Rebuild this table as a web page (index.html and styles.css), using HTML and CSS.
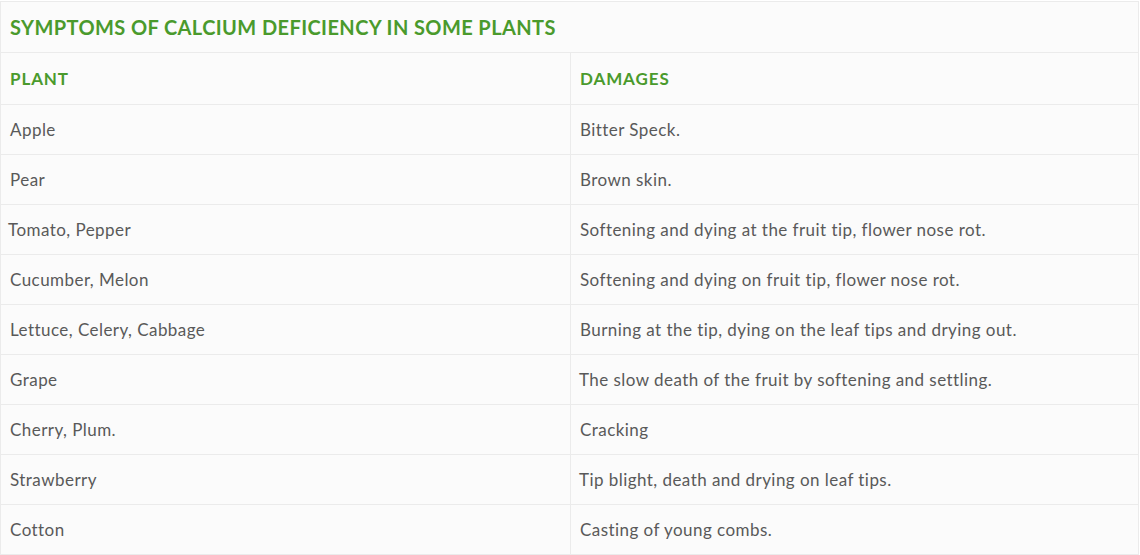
FILE: index.html
```html
<!DOCTYPE html>
<html>
<head>
<meta charset="utf-8">
<link rel="stylesheet" href="styles.css">
</head>
<body>
<table class="symptoms">
  <colgroup><col class="col-plant"><col class="col-dmg"></colgroup>
  <thead>
    <tr class="title-row"><th colspan="2" class="title">SYMPTOMS OF CALCIUM DEFICIENCY IN SOME PLANTS</th></tr>
    <tr class="head-row"><th>PLANT</th><th>DAMAGES</th></tr>
  </thead>
  <tbody>
    <tr><td>Apple</td><td>Bitter Speck.</td></tr>
    <tr><td>Pear</td><td>Brown skin.</td></tr>
    <tr><td class="tight">Tomato, Pepper</td><td>Softening and dying at the fruit tip, flower nose rot.</td></tr>
    <tr><td>Cucumber, Melon</td><td>Softening and dying on fruit tip, flower nose rot.</td></tr>
    <tr><td>Lettuce, Celery, Cabbage</td><td>Burning at the tip, dying on the leaf tips and drying out.</td></tr>
    <tr><td>Grape</td><td class="nudge">The slow death of the fruit by softening and settling.</td></tr>
    <tr><td>Cherry, Plum.</td><td>Cracking</td></tr>
    <tr><td>Strawberry</td><td class="nudge">Tip blight, death and drying on leaf tips.</td></tr>
    <tr><td>Cotton</td><td>Casting of young combs.</td></tr>
  </tbody>
</table>
</body>
</html>
```

FILE: styles.css
```css
html, body {
  margin: 0;
  padding: 0;
  background: #ffffff;
}
body {
  padding-top: 1px;
  font-family: "Lato", "Liberation Sans", sans-serif;
}
.symptoms {
  width: 1139px;
  border-collapse: collapse;
  background: #fbfbfb;
  color: #595959;
  table-layout: fixed;
}
.col-plant {
  width: 570px;
}
.symptoms th,
.symptoms td {
  border: 1px solid #ebebeb;
  text-align: left;
  padding: 0 9px;
  font-size: 17px;
  letter-spacing: 0.45px;
}
.symptoms td {
  height: 49px;
}
.title-row th {
  height: 50px;
  font-size: 20px;
  font-weight: 700;
  letter-spacing: 0.4px;
  color: #4a9a2c;
}
.head-row th {
  height: 51px;
  font-weight: 700;
  letter-spacing: 0.9px;
  color: #4a9a2c;
}
.symptoms td.tight {
  padding-left: 7px;
}
.symptoms td.nudge {
  padding-left: 8px;
}
```
